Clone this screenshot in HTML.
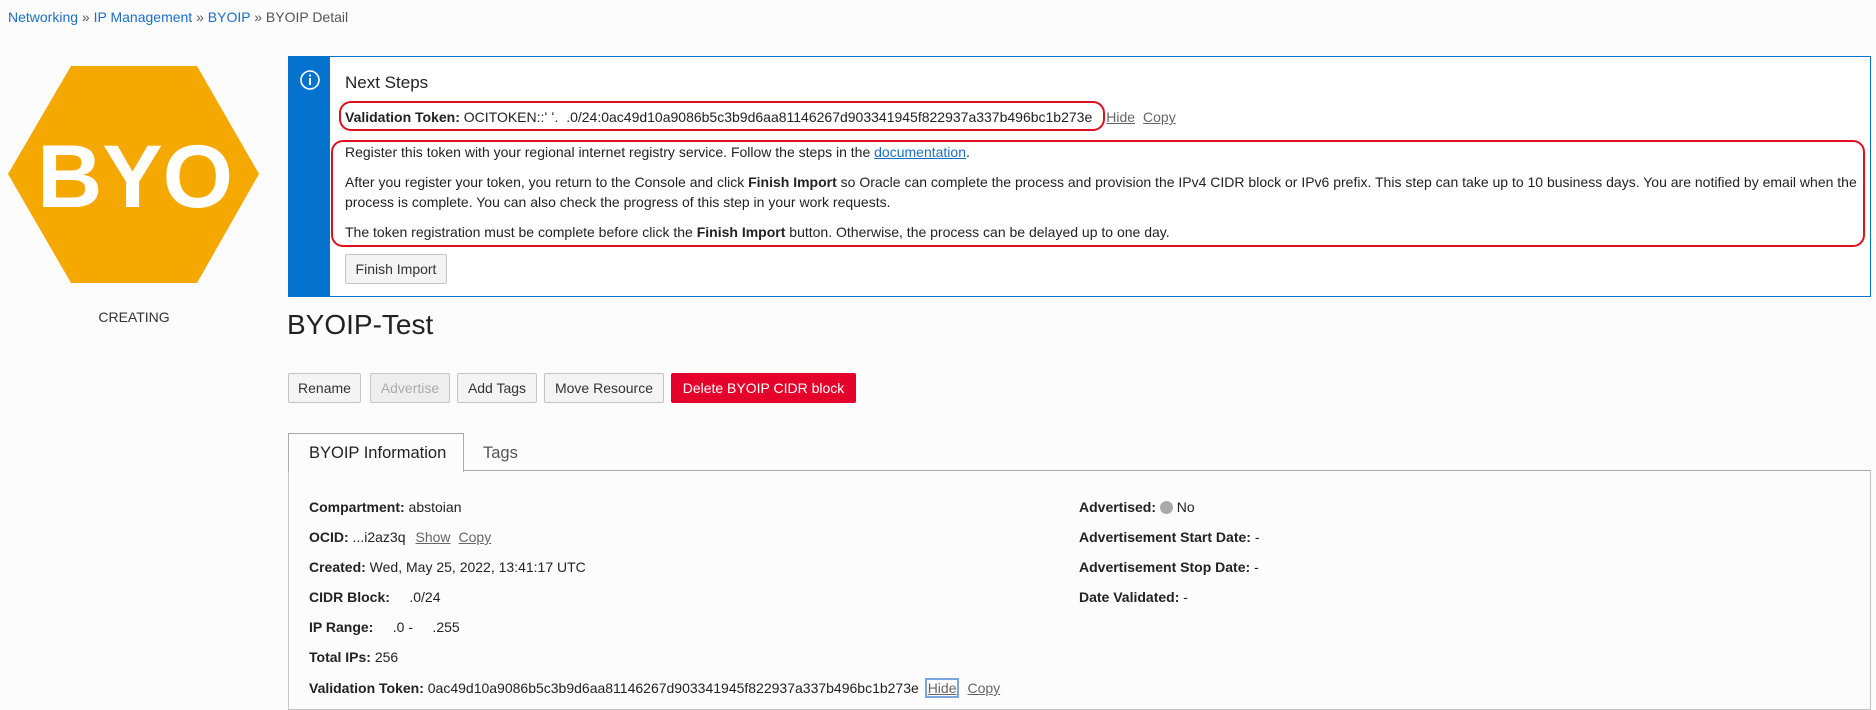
<!DOCTYPE html>
<html><head><meta charset="utf-8"><style>
*{box-sizing:border-box;margin:0;padding:0}
body{width:1876px;height:708px;background:#fcfcfc;font-family:"Liberation Sans",Arial,sans-serif;color:#222;font-size:14px;position:relative;overflow:hidden}
.abs{position:absolute;white-space:nowrap}
a{color:#1a6ec7;text-decoration:none}
.crumb{left:8px;top:9px;font-size:14px;color:#555}
.panel{left:288px;top:56px;width:1583px;height:241px;border:1px solid #0572ce;background:#fff}
.bar{position:absolute;left:0;top:0;width:41px;height:100%;background:#0572ce}
.btn{position:absolute;height:30px;border:1px solid #c4c4c4;background:#f4f4f4;border-radius:2px;font-size:14px;line-height:28px;text-align:center;color:#333}
.lnk{color:#666;text-decoration:underline;margin-left:8px}
.red{position:absolute;border:2px solid #e0101e;border-radius:12px}
b{font-weight:bold}
</style></head><body>
<div class="abs crumb"><a>Networking</a> » <a>IP Management</a> » <a>BYOIP</a> » BYOIP Detail</div>

<svg class="abs" style="left:8px;top:66px" width="253" height="218"><polygon points="63,0 189,0 251,108 189,217 63,217 0,108" fill="#f5a800"/><text x="29" y="141" textLength="196" lengthAdjust="spacingAndGlyphs" font-family="Liberation Sans,Arial,sans-serif" font-weight="bold" font-size="89" fill="#fff">BYO</text></svg>
<div class="abs" style="left:84px;top:309px;width:100px;text-align:center;font-size:14px;color:#333">CREATING</div>

<div class="abs panel">
 <div class="bar"><svg style="position:absolute;left:10px;top:12px" width="22" height="22"><circle cx="11" cy="11" r="9" fill="none" stroke="#fff" stroke-width="1.6"/><rect x="10" y="9" width="2" height="7" fill="#fff"/><rect x="10" y="5.5" width="2" height="2" fill="#fff"/></svg></div>
 <div class="abs" style="left:56px;top:16px;font-size:17px;color:#222">Next Steps</div>
 <div class="abs" style="left:56px;top:52px"><b>Validation Token:</b> OCITOKEN::ʻ ʻ.&nbsp;&nbsp;.0/24:0ac49d10a9086b5c3b9d6aa81146267d903341945f822937a337b496bc1b273e<span class="lnk" style="margin-left:14px">Hide</span><span class="lnk">Copy</span></div>
 <div class="red" style="left:50px;top:44px;width:766px;height:30px"></div>
 <div class="abs" style="left:56px;top:87px">Register this token with your regional internet registry service. Follow the steps in the <a style="text-decoration:underline">documentation</a>.</div>
 <div class="abs" style="left:56px;top:117px">After you register your token, you return to the Console and click <b>Finish Import</b> so Oracle can complete the process and provision the IPv4 CIDR block or IPv6 prefix. This step can take up to 10 business days. You are notified by email when the</div>
 <div class="abs" style="left:56px;top:137px">process is complete. You can also check the progress of this step in your work requests.</div>
 <div class="abs" style="left:56px;top:167px">The token registration must be complete before click the <b>Finish Import</b> button. Otherwise, the process can be delayed up to one day.</div>
 <div class="red" style="left:42px;top:83px;width:1534px;height:107px"></div>
 <div class="btn" style="left:56px;top:197px;width:102px">Finish Import</div>
</div>

<div class="abs" style="left:287px;top:309px;font-size:28px;color:#222">BYOIP-Test</div>

<div class="btn" style="left:288px;top:373px;width:73px">Rename</div>
<div class="btn" style="left:370px;top:373px;width:80px;color:#aaa;background:#eee">Advertise</div>
<div class="btn" style="left:457px;top:373px;width:80px">Add Tags</div>
<div class="btn" style="left:544px;top:373px;width:120px">Move Resource</div>
<div class="btn" style="left:671px;top:373px;width:185px;background:#e4002b;border-color:#e4002b;color:#fff">Delete BYOIP CIDR block</div>

<div class="abs" style="left:288px;top:470px;width:1583px;height:240px;border:1px solid #c4c4c4;border-top:1px solid #aaa;background:#fcfcfc"></div>
<div class="abs" style="left:288px;top:433px;width:176px;height:39px;border:1px solid #aaa;border-bottom:none;background:#fcfcfc"></div>
<div class="abs" style="left:309px;top:444px;font-size:16.5px;color:#222">BYOIP Information</div>
<div class="abs" style="left:483px;top:444px;font-size:16.5px;color:#555">Tags</div>

<div class="abs" style="left:309px;top:499px"><b>Compartment:</b> abstoian</div>
<div class="abs" style="left:309px;top:529px"><b>OCID:</b> ...i2az3q<span class="lnk" style="margin-left:10px">Show</span><span class="lnk">Copy</span></div>
<div class="abs" style="left:309px;top:559px"><b>Created:</b> Wed, May 25, 2022, 13:41:17 UTC</div>
<div class="abs" style="left:309px;top:589px"><b>CIDR Block:</b> &nbsp; &nbsp; .0/24</div>
<div class="abs" style="left:309px;top:619px"><b>IP Range:</b> &nbsp; &nbsp; .0 - &nbsp; &nbsp; .255</div>
<div class="abs" style="left:309px;top:649px"><b>Total IPs:</b> 256</div>
<div class="abs" style="left:309px;top:680px"><b>Validation Token:</b> 0ac49d10a9086b5c3b9d6aa81146267d903341945f822937a337b496bc1b273e <span class="lnk" style="margin-left:4px;outline:2px solid #7aa7e0;padding:0 1px">Hide</span><span class="lnk" style="margin-left:10px">Copy</span></div>

<div class="abs" style="left:1079px;top:499px"><b>Advertised:</b> <span style="display:inline-block;width:13px;height:13px;border-radius:50%;background:#aaa;vertical-align:-2px"></span> No</div>
<div class="abs" style="left:1079px;top:529px"><b>Advertisement Start Date:</b> -</div>
<div class="abs" style="left:1079px;top:559px"><b>Advertisement Stop Date:</b> -</div>
<div class="abs" style="left:1079px;top:589px"><b>Date Validated:</b> -</div>
</body></html>
